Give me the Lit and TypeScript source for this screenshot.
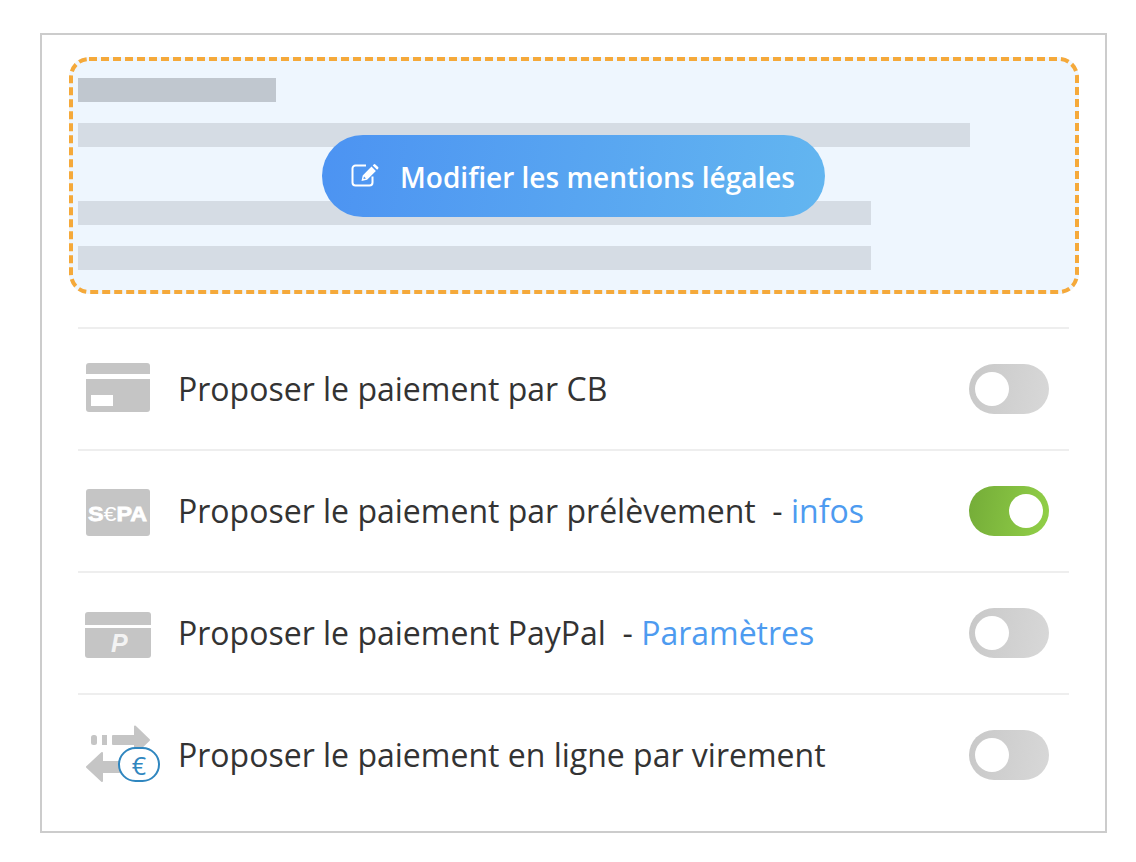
import {LitElement, html, css, svg} from 'lit';
import {customElement} from 'lit/decorators.js';

const ICONS = {
  card: svg`
    <path class="fill" d="M8 7a3 3 0 0 1 3-3h58a3 3 0 0 1 3 3v8H8z" />
    <path class="fill" d="M8 20h64v30a3 3 0 0 1-3 3H11a3 3 0 0 1-3-3z" />
    <rect x="13" y="36" width="22" height="11" fill="#fff" />`,
  sepa: svg`
    <rect class="fill" x="8" y="8" width="64" height="47" rx="3" />
    <text class="sepa" x="10" y="40" textLength="59" lengthAdjust="spacingAndGlyphs">S<tspan class="thin">€</tspan>PA</text>`,
  paypal: svg`
    <path class="fill" d="M7 12a3 3 0 0 1 3-3h60a3 3 0 0 1 3 3v10H7z" />
    <path class="fill" d="M7 25h66v27a3 3 0 0 1-3 3H10a3 3 0 0 1-3-3z" />
    <text class="pp" x="33" y="49">P</text>`,
  transfer: svg`
    <rect class="fill" x="13" y="10" width="6" height="10" rx="2.500" />
    <rect class="fill" x="24" y="10" width="5" height="10" />
    <path class="fill soft" d="M35 11h22V1.500L71 15 57 28.500V19H35z" />
    <path class="fill soft" d="M9 42l15-14v9h24v10H24v9z" />
    <rect class="pill" x="41" y="23" width="40" height="33" rx="16.500" />
    <text class="euro" x="61" y="49.500" text-anchor="middle">€</text>`,
};

const ROWS = [
  {icon: ICONS.card, label: 'Proposer le paiement par CB', on: false},
  {icon: ICONS.sepa, label: 'Proposer le paiement par prélèvement', link: 'infos', on: true},
  {icon: ICONS.paypal, label: 'Proposer le paiement PayPal', link: 'Paramètres', on: false},
  {icon: ICONS.transfer, label: 'Proposer le paiement en ligne par virement', on: false},
];

@customElement('app-root')
export class AppRoot extends LitElement {
  static styles = css`
    :host {
      display: block;
      padding: 33px 29px 29px 40px;
      font-family: 'Open Sans', sans-serif;
      color: #333;
    }

    .card {
      box-sizing: border-box;
      width: 1067px;
      height: 800px;
      border: 2px solid #ccc;
      padding: 22px 36px 0;
    }

    .notice {
      position: relative;
      box-sizing: border-box;
      width: 1010px;
      height: 237px;
      margin: 0 0 33px -9px;
      padding: 21px 9px;
      background: #eef6fe;
      border-radius: 20px;
      display: flex;
      flex-direction: column;
    }

    .dashes {
      position: absolute;
      inset: 0;
      width: 100%;
      height: 100%;
    }

    .dashes rect {
      fill: none;
      stroke: #f5a93a;
      stroke-width: 4;
      stroke-dasharray: 8 4;
    }

    .bar {
      height: 24px;
      background: #d5dce4;
      flex: none;
    }

    .bar.title {
      width: 198px;
      background: #c0c7cf;
      margin-bottom: 21px;
    }

    .bar.wide {
      width: 892px;
      margin-bottom: 54px;
    }

    .bar.mid {
      width: 793px;
      margin-bottom: 21px;
    }

    .edit {
      position: absolute;
      left: 253px;
      top: 78px;
      box-sizing: border-box;
      width: 503px;
      height: 82px;
      border-radius: 41px;
      background: linear-gradient(100deg, #4c93f2, #63b6f0);
      color: #fff;
      font-size: 28px;
      font-weight: 600;
      display: flex;
      align-items: center;
      padding-left: 29px;
      gap: 20px;
    }

    .edit span {
      padding-top: 2px;
    }

    .edit svg {
      flex: none;
      width: 29px;
      height: 26px;
      fill: none;
      stroke: #fff;
      stroke-width: 2;
    }

    .edit svg .pen {
      fill: #fff;
      fill-rule: evenodd;
      stroke: none;
    }

    .row {
      box-sizing: border-box;
      width: 991px;
      height: 122px;
      border-top: 2px solid #eee;
      display: flex;
      align-items: center;
      padding-right: 20px;
      font-size: 32px;
    }

    .icon {
      flex: none;
      width: 100px;
      height: 60px;
    }

    .fill {
      fill: #c5c5c5;
    }

    .soft {
      stroke: #c5c5c5;
      stroke-width: 2;
      stroke-linejoin: round;
    }

    .sepa {
      fill: #fff;
      font: 900 21px 'Liberation Sans', sans-serif;
      stroke: #fff;
      stroke-width: 0.8;
    }

    .sepa .thin {
      font-weight: 400;
      stroke: none;
    }

    .pp {
      fill: #fff;
      opacity: 0.8;
      font: italic 700 25px 'Liberation Sans', sans-serif;
    }

    .pill {
      fill: #fff;
      stroke: #2f86bf;
      stroke-width: 2;
    }

    .euro {
      fill: #2f86bf;
      font: 25px 'Open Sans', sans-serif;
    }

    .label {
      flex: 1;
      white-space: pre;
      padding-bottom: 2px;
    }

    .label a {
      color: #4d9bf0;
      text-decoration: none;
    }

    .toggle {
      flex: none;
      position: relative;
      width: 80px;
      height: 50px;
      border-radius: 25px;
      background: linear-gradient(100deg, #c8c8c8, #d8d8d8);
    }

    .toggle::after {
      content: '';
      position: absolute;
      left: 6px;
      top: 8px;
      width: 34px;
      height: 34px;
      border-radius: 50%;
      background: #fff;
    }

    .toggle.on {
      background: linear-gradient(100deg, #74ac38, #92d048);
    }

    .toggle.on::after {
      left: 40px;
    }
  `;

  render() {
    return html`
      <div class="card">
        <div class="notice">
          <svg class="dashes" viewBox="0 0 1010 237">
            <rect x="2" y="2" width="1006" height="233" rx="18" />
          </svg>
          <div class="bar title"></div>
          <div class="bar wide"></div>
          <div class="bar mid"></div>
          <div class="bar mid"></div>
          <div class="edit">
            <svg viewBox="0 0 29 26">
              <path d="M15 2.500H4.500a3 3 0 0 0-3 3v14a3 3 0 0 0 3 3h14a3 3 0 0 0 3-3v-6" />
              <path class="pen" d="M10.500 18l1.200-5.600 8.800-8.800 4.400 4.400-8.800 8.800zM13 13.500l-.6 2.600 2.600-.6z" />
              <path class="pen" d="M21.700 2.400l1-1a1.200 1.200 0 0 1 1.700 0l2.700 2.700a1.200 1.200 0 0 1 0 1.700l-1 1z" />
            </svg>
            <span>Modifier les mentions légales</span>
          </div>
        </div>
        ${ROWS.map(
          (row) => html`
            <div class="row">
              <svg class="icon" viewBox="0 0 100 60">${row.icon}</svg>
              <span class="label">${row.label}${row.link
                ? html`  - <a href="#">${row.link}</a>`
                : ''}</span>
              <div class="toggle ${row.on ? 'on' : ''}"></div>
            </div>
          `
        )}
      </div>
    `;
  }
}
